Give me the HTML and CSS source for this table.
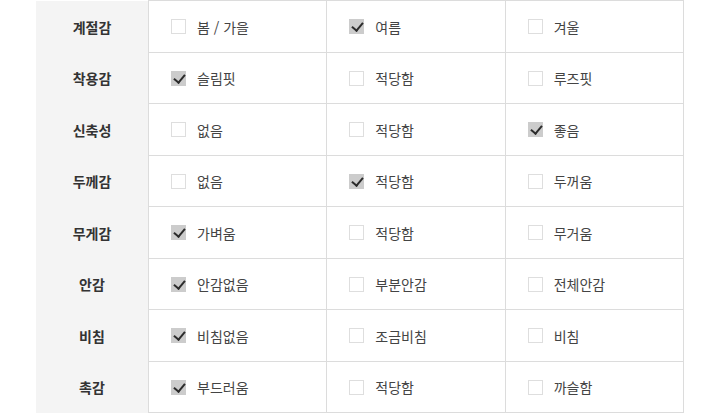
FILE: index.html
```html
<!DOCTYPE html>
<html lang="ko">
<head>
<meta charset="utf-8">
<link rel="stylesheet" href="styles.css">
</head>
<body>
<table class="spec">
  <tbody>
    <tr><th>계절감</th>
      <td><span class="opt"><i class="box"></i>봄 / 가을</span></td>
      <td><span class="opt"><i class="box on"></i>여름</span></td>
      <td><span class="opt"><i class="box"></i>겨울</span></td></tr>
    <tr><th>착용감</th>
      <td><span class="opt"><i class="box on"></i>슬림핏</span></td>
      <td><span class="opt"><i class="box"></i>적당함</span></td>
      <td><span class="opt"><i class="box"></i>루즈핏</span></td></tr>
    <tr><th>신축성</th>
      <td><span class="opt"><i class="box"></i>없음</span></td>
      <td><span class="opt"><i class="box"></i>적당함</span></td>
      <td><span class="opt"><i class="box on"></i>좋음</span></td></tr>
    <tr><th>두께감</th>
      <td><span class="opt"><i class="box"></i>없음</span></td>
      <td><span class="opt"><i class="box on"></i>적당함</span></td>
      <td><span class="opt"><i class="box"></i>두꺼움</span></td></tr>
    <tr><th>무게감</th>
      <td><span class="opt"><i class="box on"></i>가벼움</span></td>
      <td><span class="opt"><i class="box"></i>적당함</span></td>
      <td><span class="opt"><i class="box"></i>무거움</span></td></tr>
    <tr><th>안감</th>
      <td><span class="opt"><i class="box on"></i>안감없음</span></td>
      <td><span class="opt"><i class="box"></i>부분안감</span></td>
      <td><span class="opt"><i class="box"></i>전체안감</span></td></tr>
    <tr><th>비침</th>
      <td><span class="opt"><i class="box on"></i>비침없음</span></td>
      <td><span class="opt"><i class="box"></i>조금비침</span></td>
      <td><span class="opt"><i class="box"></i>비침</span></td></tr>
    <tr><th>촉감</th>
      <td><span class="opt"><i class="box on"></i>부드러움</span></td>
      <td><span class="opt"><i class="box"></i>적당함</span></td>
      <td><span class="opt"><i class="box"></i>까슬함</span></td></tr>
  </tbody>
</table>
</body>
</html>
```
FILE: styles.css
```css
html, body {
  margin: 0;
  padding: 0;
  background: #fff;
}
body {
  font-family: "Noto Sans CJK KR", "Noto Sans", sans-serif;
}
.spec {
  margin-left: 36px;
  width: 648px;
  border-collapse: collapse;
  table-layout: fixed;
}
.spec tr {
  height: 51.5px;
}
.spec th {
  width: 112px;
  background: #f4f4f4;
  color: #333;
  font-size: 14px;
  font-weight: 700;
  text-align: center;
  padding: 1px 0 0;
  border: none;
}
.spec td {
  border: 1px solid #dcdcdc;
  padding: 1px 0 0 22px;
  color: #444;
  font-size: 14px;
}
.opt {
  display: flex;
  align-items: center;
  gap: 11px;
  line-height: 20px;
}
.box {
  display: inline-block;
  box-sizing: border-box;
  width: 15px;
  height: 15px;
  border: 1px solid #dedede;
  background: #fff;
  position: relative;
  flex: none;
}
.box.on {
  background: #cccccc;
  border-color: #cccccc;
}
.box.on::after {
  content: "";
  position: absolute;
  left: 4px;
  top: 0px;
  width: 5px;
  height: 9px;
  border-right: 2px solid #2b2b2b;
  border-bottom: 2px solid #2b2b2b;
  transform: rotate(40deg);
}
```
